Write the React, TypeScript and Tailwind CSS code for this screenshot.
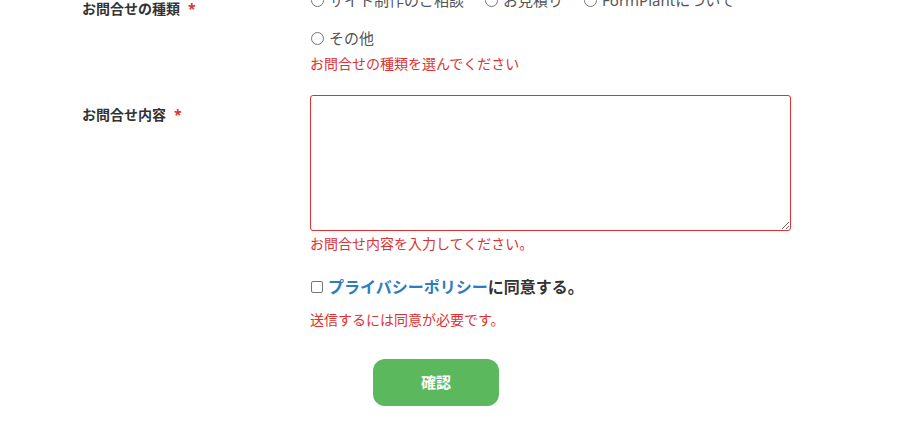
import React from 'react'

const font = { fontFamily: '"Noto Sans", "Noto Sans CJK JP", sans-serif' }

function Radio({ label }: { label: string }) {
  return (
    <label className="flex items-center h-[24px] mr-[20px] text-[15px] text-[#555]">
      <span className="w-[13px] h-[13px] ml-[1px] shrink-0 rounded-full border border-[#767676] bg-white" />
      <span className="ml-[5px] leading-[24px]">{label}</span>
    </label>
  )
}

function Label({ text, className }: { text: string; className?: string }) {
  return (
    <div className={'w-[228px] shrink-0 text-[14px] font-bold text-[#333] leading-[20px] ' + (className || '')}>
      {text}
      <span className="ml-[8px] text-[#dc3232]">*</span>
    </div>
  )
}

export default function App() {
  return (
    <div style={font} className="w-[897px] h-[435px] overflow-hidden bg-white">
      <div className="pl-[82px] mt-[-12px]">
        <div className="flex">
          <Label text="お問合せの種類" className="pt-[11px]" />
          <div className="w-[481px]">
            <div className="flex flex-wrap gap-y-[14px]">
              <Radio label="サイト制作のご相談" />
              <Radio label="お見積り" />
              <Radio label="FormPlantについて" />
              <Radio label="その他" />
            </div>
            <p className="mt-[4px] text-[14px] leading-[20px] text-[#dc3232]">お問合せの種類を選んでください</p>
          </div>
        </div>

        <div className="flex mt-[21px]">
          <Label text="お問合せ内容" className="pt-[10px]" />
          <div className="w-[481px]">
            <textarea className="block w-[481px] h-[136px] rounded-[3px] border border-[#dc3232] outline-none resize-y" />
            <p className="mt-[3px] text-[14px] leading-[20px] text-[#dc3232]">お問合せ内容を入力してください。</p>

            <label className="flex items-center h-[24px] mt-[21px] text-[16px] font-bold">
              <span className="w-[12px] h-[12px] ml-[1px] shrink-0 rounded-[2px] border border-[#767676] bg-white" />
              <span className="ml-[5px] text-[#2e7dbf]">プライバシーポリシー</span>
              <span className="text-[#333]">に同意する。</span>
            </label>
            <p className="mt-[11px] text-[14px] leading-[20px] text-[#dc3232]">送信するには同意が必要です。</p>

            <button className="mt-[29px] ml-[63px] w-[126px] h-[47px] rounded-[12px] bg-[#5cb85c] text-white text-[15px] font-bold">
              確認
            </button>
          </div>
        </div>
      </div>
    </div>
  )
}
